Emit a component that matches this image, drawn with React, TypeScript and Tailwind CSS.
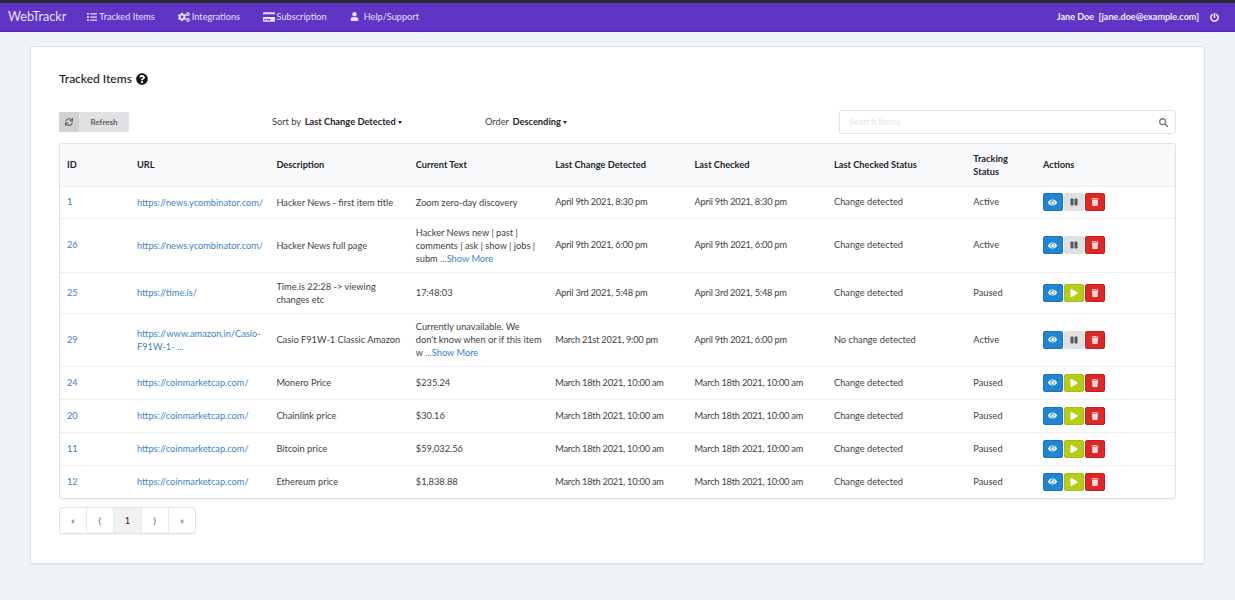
import { FaPowerOff, FaSearch, FaSync, FaEye, FaPause, FaPlay, FaTrash, FaList, FaCreditCard, FaUser, FaCogs, FaQuestionCircle } from "react-icons/fa";

type Row = { id: string; url: string[]; desc: string[]; text: string[]; more?: boolean; change: string; checked: string; status: string; track: string; h: string };

const rows: Row[] = [
  { id: "1", url: ["https://news.ycombinator.com/"], desc: ["Hacker News - first item title"], text: ["Zoom zero-day discovery"], change: "April 9th 2021, 8:30 pm", checked: "April 9th 2021, 8:30 pm", status: "Change detected", track: "Active", h: "h-[32px]" },
  { id: "26", url: ["https://news.ycombinator.com/"], desc: ["Hacker News full page"], text: ["Hacker News new | past |", "comments | ask | show | jobs |", "subm "], more: true, change: "April 9th 2021, 6:00 pm", checked: "April 9th 2021, 6:00 pm", status: "Change detected", track: "Active", h: "h-[54px]" },
  { id: "25", url: ["https://time.is/"], desc: ["Time.is 22:28 -> viewing", "changes etc"], text: ["17:48:03"], change: "April 3rd 2021, 5:48 pm", checked: "April 3rd 2021, 5:48 pm", status: "Change detected", track: "Paused", h: "h-[41px]" },
  { id: "29", url: ["https://www.amazon.in/Casio-", "F91W-1- ..."], desc: ["Casio F91W-1 Classic Amazon"], text: ["Currently unavailable. We", "don't know when or if this item", "w "], more: true, change: "March 21st 2021, 9:00 pm", checked: "April 9th 2021, 6:00 pm", status: "No change detected", track: "Active", h: "h-[53px]" },
  { id: "24", url: ["https://coinmarketcap.com/"], desc: ["Monero Price"], text: ["$235.24"], change: "March 18th 2021, 10:00 am", checked: "March 18th 2021, 10:00 am", status: "Change detected", track: "Paused", h: "h-[33px]" },
  { id: "20", url: ["https://coinmarketcap.com/"], desc: ["Chainlink price"], text: ["$30.16"], change: "March 18th 2021, 10:00 am", checked: "March 18th 2021, 10:00 am", status: "Change detected", track: "Paused", h: "h-[33px]" },
  { id: "11", url: ["https://coinmarketcap.com/"], desc: ["Bitcoin price"], text: ["$59,032.56"], change: "March 18th 2021, 10:00 am", checked: "March 18th 2021, 10:00 am", status: "Change detected", track: "Paused", h: "h-[33px]" },
  { id: "12", url: ["https://coinmarketcap.com/"], desc: ["Ethereum price"], text: ["$1,838.88"], change: "March 18th 2021, 10:00 am", checked: "March 18th 2021, 10:00 am", status: "Change detected", track: "Paused", h: "h-[33px]" },
];

const headers = ["ID", "URL", "Description", "Current Text", "Last Change Detected", "Last Checked", "Last Checked Status"];

function Caret() {
  return <span className="ml-[2px] inline-block border-x-[2.5px] border-t-[3px] border-x-transparent border-t-[#1f2229] align-middle" />;
}

function NavItem({ icon, label, gap }: { icon: React.ReactNode; label: string; gap: string }) {
  return (
    <div className={`flex items-center ${gap}`}>
      {icon}
      <span>{label}</span>
    </div>
  );
}

function Actions({ active }: { active: boolean }) {
  return (
    <div className="flex gap-[1px]">
      <span className="flex h-[18px] w-[20px] items-center justify-center rounded-[2px] border border-[#1a72bb] bg-[#2185d0] text-white">
        <FaEye size={9} />
      </span>
      {active ? (
        <span className="flex h-[18px] w-[20px] items-center justify-center rounded-[2px] border border-[#dcdde0] bg-[#e0e1e2] text-[#55565a]">
          <FaPause size={8} />
        </span>
      ) : (
        <span className="flex h-[18px] w-[20px] items-center justify-center rounded-[2px] border border-[#abbf0e] bg-[#b5cc18] text-white">
          <FaPlay size={8} />
        </span>
      )}
      <span className="flex h-[18px] w-[20px] items-center justify-center rounded-[2px] border border-[#c91c1c] bg-[#db2828] text-[#fbdada]">
        <FaTrash size={8} />
      </span>
    </div>
  );
}

export default function App() {
  return (
    <div className="flex min-h-[600px] flex-col bg-[#eff3f6] font-['Lato',sans-serif] text-[9.25px] text-[#3d3f44]">
      <div className="h-[3px] bg-[#2b2a30]" />
      <nav className="flex h-[29px] items-center border-b border-[#5220b8] bg-[#6035c6] pl-[8px] pr-[16px] text-[9.2px] text-[#e6e0f6]">
        <span className="mr-[21px] text-[12.6px] leading-none">WebTrackr</span>
        <div className="flex items-center gap-[23px]">
          <NavItem gap="gap-[2px]" icon={<FaList size={10} />} label="Tracked Items" />
          <NavItem gap="gap-[2px]" icon={<FaCogs size={12} />} label="Integrations" />
          <NavItem gap="gap-[1.5px]" icon={<FaCreditCard size={12} />} label="Subscription" />
          <NavItem gap="gap-[5px]" icon={<FaUser size={9} />} label="Help/Support" />
        </div>
        <span className="ml-auto text-[9.05px] font-bold text-[#f3f0fb]">Jane Doe&nbsp;&nbsp;[jane.doe@example.com]</span>
        <FaPowerOff size={9} className="ml-[11px] text-white" />
      </nav>

      <main className="mx-[30px] mt-[14px] h-[518px] rounded-[3px] border border-[#dddfe2] bg-white px-[28px] pt-[24px] shadow-[0_1px_2px_rgba(0,0,0,0.06)]">
        <div className="flex items-center gap-[4px] text-[12px] font-medium leading-[16px] text-[#16181d]">
          <span>Tracked Items</span>
          <FaQuestionCircle size={12} className="text-[#16181d]" />
        </div>

        <div className="mt-[23px] flex h-[24px] items-center">
          <div className="flex h-[20px] w-[70px] items-center overflow-hidden rounded-[2px] bg-[#e0e1e2] text-[8px] font-bold text-[#5d5f64]">
            <span className="flex h-full w-[20px] items-center justify-center bg-[#d0d1d3]">
              <FaSync size={8} />
            </span>
            <span className="flex-1 text-center">Refresh</span>
          </div>
          <div className="ml-[143px] w-[213px] whitespace-nowrap">
            <span className="mr-[3.5px]">Sort by</span>
            <span className="text-[9.3px] font-bold text-[#1f2229]">Last Change Detected</span>
            <Caret />
          </div>
          <div className="whitespace-nowrap">
            <span className="mr-[3.5px]">Order</span>
            <span className="text-[9.3px] font-bold text-[#1f2229]">Descending</span>
            <Caret />
          </div>
          <div className="ml-auto flex h-[24px] w-[337px] items-center justify-between rounded-[3px] border border-[#dfe1e4] pl-[9px] pr-[7px] text-[#e4e5e7]">
            <span>Search Items</span>
            <FaSearch size={9} className="text-[#76787c]" />
          </div>
        </div>

        <div className="mt-[9px] overflow-hidden rounded-[3px] border border-[#dfe1e4] shadow-[0_1px_1px_rgba(0,0,0,0.04)]">
          <table className="w-full table-fixed border-collapse text-left">
            <colgroup>
              <col className="w-[70px]" />
              <col className="w-[139.4px]" />
              <col className="w-[139.4px]" />
              <col className="w-[139.4px]" />
              <col className="w-[139.4px]" />
              <col className="w-[139.4px]" />
              <col className="w-[139.4px]" />
              <col className="w-[69.6px]" />
              <col />
            </colgroup>
            <thead>
              <tr className="h-[42px] bg-[#f8f9fa] text-[#1f2229]">
                {headers.map((h) => (
                  <th key={h} className="px-[7px] font-bold leading-[13px]">{h}</th>
                ))}
                <th className="px-[7px] font-bold leading-[13px]">Tracking Status</th>
                <th className="px-[7px] font-bold leading-[13px]">Actions</th>
              </tr>
            </thead>
            <tbody>
              {rows.map((r) => (
                <tr key={r.id} className={`${r.h} border-t border-[#eceef0]`}>
                  <td className="px-[7px] text-[#4183c4]">{r.id}</td>
                  <td className="px-[7px] leading-[13px] text-[#4183c4]">
                    {r.url.map((u) => <div key={u} className="whitespace-nowrap">{u}</div>)}
                  </td>
                  <td className="px-[7px] leading-[13px]">
                    {r.desc.map((d) => <div key={d} className="whitespace-nowrap">{d}</div>)}
                  </td>
                  <td className="px-[7px] leading-[13px]">
                    {r.text.map((t, i) => (
                      <div key={t} className="whitespace-pre">
                        {t}
                        {r.more && i === r.text.length - 1 && <span className="text-[#4183c4]">...Show More</span>}
                      </div>
                    ))}
                  </td>
                  <td className="whitespace-nowrap px-[7px] tracking-[-0.22px]">{r.change}</td>
                  <td className="whitespace-nowrap px-[7px] tracking-[-0.22px]">{r.checked}</td>
                  <td className="px-[7px]">{r.status}</td>
                  <td className="px-[7px]">{r.track}</td>
                  <td className="px-[7px]"><Actions active={r.track === "Active"} /></td>
                </tr>
              ))}
            </tbody>
          </table>
        </div>

        <div className="mt-[8px] flex h-[27px] w-[137px] overflow-hidden rounded-[3px] border border-[#dfe1e4] text-[#5d5f64] shadow-[0_1px_1px_rgba(0,0,0,0.04)]">
          <span className="flex flex-1 items-center justify-center">«</span>
          <span className="flex flex-1 items-center justify-center border-l border-[#e8e9eb]">⟨</span>
          <span className="flex flex-1 items-center justify-center border-l border-[#e8e9eb] bg-[#f2f2f2] text-[#1f2229]">1</span>
          <span className="flex flex-1 items-center justify-center border-l border-[#e8e9eb]">⟩</span>
          <span className="flex flex-1 items-center justify-center border-l border-[#e8e9eb]">»</span>
        </div>
      </main>
    </div>
  );
}
